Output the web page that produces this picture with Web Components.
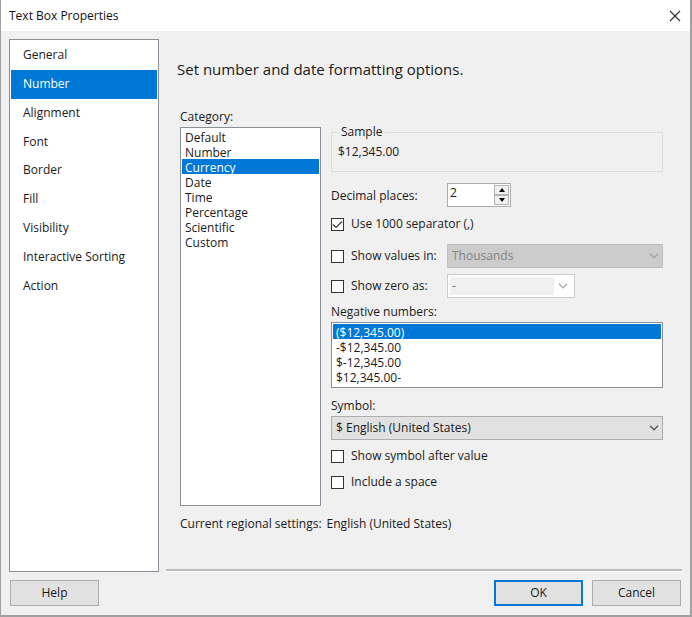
<!DOCTYPE html>
<html lang="en">
<head>
<meta charset="utf-8">
<title>Text Box Properties</title>
<style>
  body { margin: 0; font: 12px/16px "Open Sans", "Noto Sans", sans-serif; color: #1a1a1a; background: #f0f0f0;
    --face: #f0f0f0; --accent: #0078d7; --line: #8a8f98; }
  .settings { display: grid; grid-template-columns: 141px minmax(0, 1fr); column-gap: 10px; }
  .fields { display: flex; flex-direction: column; padding: 17px 0 8px; }
  .fields > :nth-child(n+2) { margin-top: 6px; }
  .fields > .wide { margin-top: 10px; }
  .regional { display: flex; gap: 5px; margin: 10px 0 0; }
</style>
</head>
<body>
<dialog-window caption="Text Box Properties">
  <page-list slot="pages" items="General|Number|Alignment|Font|Border|Fill|Visibility|Interactive Sorting|Action" current="Number"></page-list>
  <page-heading>Set number and date formatting options.</page-heading>
  <div class="settings">
    <list-box fill label="Category:" items="Default|Number|Currency|Date|Time|Percentage|Scientific|Custom" value="Currency"></list-box>
    <div class="fields">
      <group-box caption="Sample">$12,345.00</group-box>
      <spin-box class="wide" label="Decimal places:" value="2"></spin-box>
      <check-box label="Use 1000 separator (,)" checked></check-box>
      <check-box class="wide" label="Show values in:"><drop-down name="Value unit" value="Thousands" disabled></drop-down></check-box>
      <check-box label="Show zero as:"><combo-box name="Zero text" value="-"></combo-box></check-box>
      <list-box label="Negative numbers:" items="($12,345.00)|-$12,345.00|$-12,345.00|$12,345.00-" value="($12,345.00)"></list-box>
      <drop-down class="wide" label="Symbol:" value="$ English (United States)"></drop-down>
      <check-box label="Show symbol after value"></check-box>
      <check-box label="Include a space"></check-box>
    </div>
  </div>
  <p class="regional"><span>Current regional settings:</span><span>English (United States)</span></p>
  <push-button slot="help">Help</push-button>
  <push-button slot="actions" primary>OK</push-button>
  <push-button slot="actions">Cancel</push-button>
</dialog-window>
<script>
const BASE = `*{box-sizing:border-box} button,input,select{font:inherit;color:inherit;margin:0;border-radius:0} button{padding:0}`;
const CHEVRON = `<svg width="10" height="6" viewBox="0 0 10 6" fill="none" stroke="currentColor" stroke-width="1.3"><path d="M1 .8 5 4.8 9 .8"/></svg>`;

function define(name, css, markup) {
  customElements.define(name, class extends HTMLElement {
    connectedCallback() {
      if (this.shadowRoot) return;
      const root = this.attachShadow({ mode: "open" });
      const attr = key => this.getAttribute(key) || "";
      root.innerHTML = `<style>${BASE}${css}</style>${markup(attr, this)}`;
    }
  });
}

define("dialog-window", `
  :host{display:flex;flex-direction:column;box-sizing:border-box;min-height:100vh;background:var(--face);border:solid #a0a0a0;border-width:0 2px 2px 1px}
  header{display:flex;align-items:center;justify-content:space-between;height:31px;padding:0 6px 0 8px;background:#fff}
  header span{color:#111}
  header button{display:flex;width:18px;height:18px;align-items:center;justify-content:center;border:0;background:none;color:#333}
  .main{flex:1;display:grid;grid-template-columns:150px minmax(0,1fr);column-gap:7px;padding:8px 8px 0}
  section{display:flex;flex-direction:column;padding:0 19px 0 14px;border-bottom:1px solid #fff;box-shadow:inset 0 -2px #bdbdbd}
  footer{display:flex;gap:9px;padding:8px 9px 9px}
  .space{flex:1}`,
  a => `<header><span>${a("caption")}</span>
    <button aria-label="Close"><svg width="12" height="12" viewBox="0 0 12 12" fill="none" stroke="currentColor" stroke-width="1.2"><path d="M1 1 11 11M11 1 1 11"/></svg></button></header>
    <div class="main"><slot name="pages"></slot><section><slot></slot></section></div>
    <footer><slot name="help"></slot><div class="space"></div><slot name="actions"></slot></footer>`);

define("page-list", `
  :host{display:block;background:#fff;border:1px solid var(--line)}
  nav{display:grid;grid-template-rows:repeat(9,1fr);height:261px;padding:1px}
  button{border:0;background:none;text-align:left;padding:0 12px}
  button[aria-current]{background:var(--accent);color:#fff}`,
  a => `<nav>${a("items").split("|").map(t => `<button${t === a("current") ? ' aria-current="page"' : ""}>${t}</button>`).join("")}</nav>`);

define("page-heading", `
  :host{display:block}
  h1{margin:20px 0 28px -3px;font-size:15px;line-height:20px;font-weight:400}`,
  () => `<h1><slot></slot></h1>`);

define("list-box", `
  :host{display:flex;flex-direction:column;gap:2px}
  :host([fill]) label{padding-top:2px}
  select{display:block;width:100%;height:66px;overflow:hidden;padding:1px;border:1px solid var(--line);background:#fff;outline:0}
  :host([fill]) select{flex:1;min-height:379px}
  option{height:15px;min-height:15px;line-height:15px;padding:0 3px}
  option:checked{background:linear-gradient(var(--accent),var(--accent));color:#fff;-webkit-text-fill-color:#fff}`,
  a => { const list = a("items").split("|");
    return `<label for="list">${a("label")}</label><select id="list" size="${list.length}">${list.map(t => `<option${t === a("value") ? " selected" : ""}>${t}</option>`).join("")}</select>`; });

define("group-box", `
  :host{display:block}
  fieldset{margin:0;min-width:0;height:48px;padding:4px 6px;border:1px solid #dcdcdc}
  legend{padding:0 3px;line-height:16px}`,
  a => `<fieldset><legend>${a("caption")}</legend><slot></slot></fieldset>`);

define("spin-box", `
  :host{display:flex;align-items:center;height:26px}
  label{width:116px;padding-top:2px}
  .box{display:flex;width:64px;height:24px;padding:1px;border:1px solid #abadb3;background:#fff}
  input{flex:1;min-width:0;padding:0 0 4px 1px;border:0;background:none;appearance:textfield;outline:0}
  input::-webkit-inner-spin-button{appearance:none;margin:0}
  .arrows{display:grid;grid-template-rows:10px 10px;width:15px}
  button{display:flex;align-items:center;justify-content:center;border:1px solid #b4b4b4;background:#f0f0f0;color:#111}`,
  a => `<label for="num">${a("label")}</label><div class="box"><input id="num" type="number" value="${a("value")}">
    <div class="arrows"><button aria-label="Increase"><svg width="6" height="4" viewBox="0 0 6 4"><path d="M0 4 3 0 6 4z"/></svg></button>
    <button aria-label="Decrease"><svg width="6" height="4" viewBox="0 0 6 4"><path d="M0 0 3 4 6 0z"/></svg></button></div></div>`);

define("check-box", `
  :host{display:flex;align-items:center;min-height:20px}
  label{display:flex;align-items:center;gap:7px;white-space:nowrap}
  label.paired{width:116px}
  input{appearance:none;width:13px;height:13px;border:1px solid #333;background:#fff}
  input:checked{background:#fff url("data:image/svg+xml,%3Csvg xmlns='http://www.w3.org/2000/svg' viewBox='0 0 11 11'%3E%3Cpath d='M1 5.5 4 8.5 10 2.5' fill='none' stroke='%23333' stroke-width='1.2'/%3E%3C/svg%3E")}
  ::slotted(*){flex:1}`,
  (a, el) => `<label${el.children.length ? ' class="paired"' : ""}><input type="checkbox"${el.hasAttribute("checked") ? " checked" : ""}><span>${a("label")}</span></label><slot></slot>`);

define("drop-down", `
  :host{display:flex;flex-direction:column;gap:2px;min-width:0}
  .box{display:grid;align-items:center}
  .box>*{grid-area:1/1}
  select{appearance:none;width:100%;height:24px;padding:0 24px 0 4px;border:1px solid #adadad;background:#e1e1e1;outline:0}
  select:disabled{background:#ccc;border-color:#bfbfbf;color:#838383;opacity:1}
  svg{justify-self:end;margin-right:4px;color:#555;pointer-events:none}
  select:disabled+svg{color:#a0a0a0}`,
  (a, el) => `${a("label") ? `<label for="choice">${a("label")}</label>` : ""}<div class="box"><select id="choice"${a("name") ? ` aria-label="${a("name")}"` : ""}${el.hasAttribute("disabled") ? " disabled" : ""}><option>${a("value")}</option></select>${CHEVRON}</div>`);

define("combo-box", `
  :host{display:flex}
  .box{display:flex;width:128px;height:24px;padding:2px;border:1px solid #ccc;background:#fff}
  input{flex:1;min-width:0;padding:0 2px;border:0;background:#f0f0f0;color:#6d6d6d}
  button{display:flex;align-items:center;justify-content:center;width:18px;border:0;background:none;color:#aaa}`,
  a => `<div class="box"><input aria-label="${a("name")}" value="${a("value")}" disabled><button aria-label="Open list" disabled>${CHEVRON}</button></div>`);

define("push-button", `
  :host{display:block}
  button{display:block;width:89px;height:26px;border:1px solid #adadad;background:#e1e1e1}
  :host([primary]) button{border:2px solid var(--accent)}`,
  () => `<button><slot></slot></button>`);
</script>
</body>
</html>
